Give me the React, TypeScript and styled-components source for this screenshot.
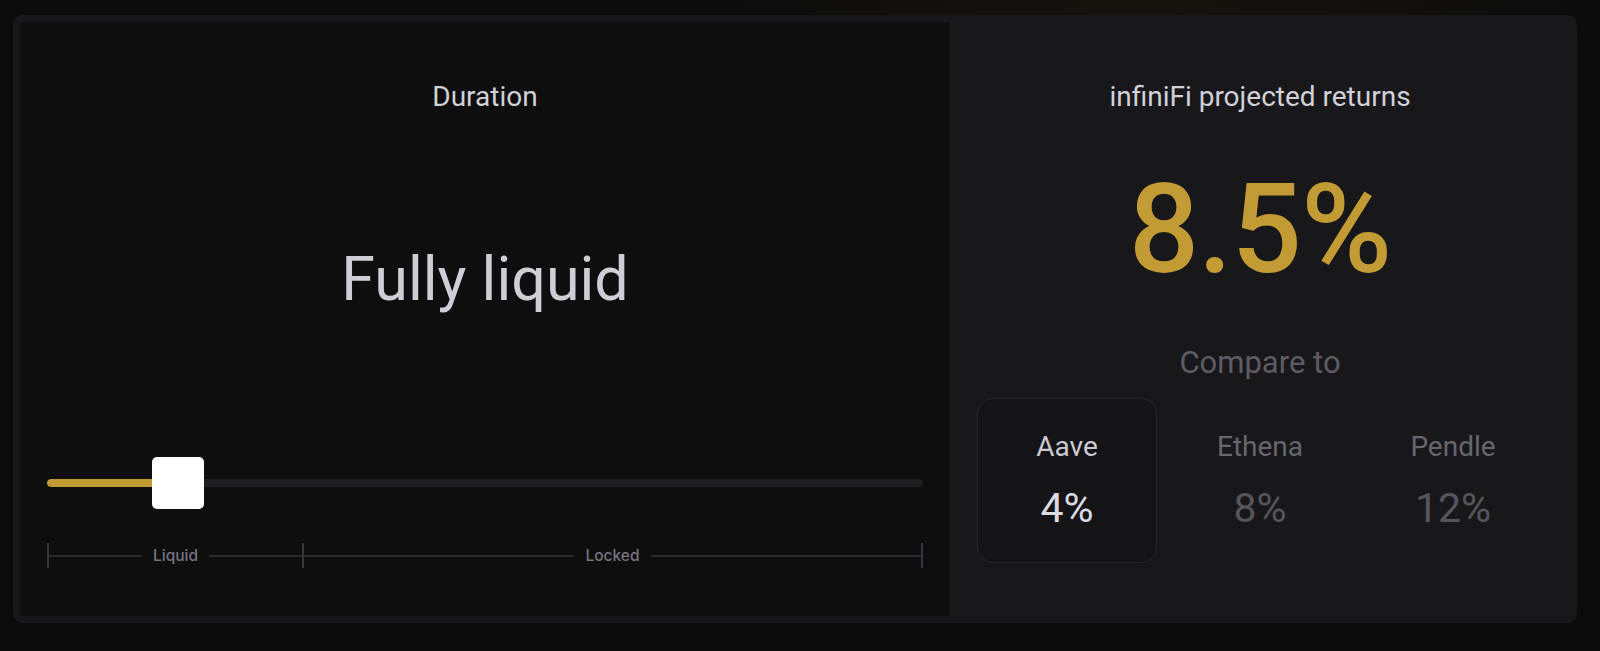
import React from "react";
import styled, { createGlobalStyle } from "styled-components";

const Global = createGlobalStyle`
  html, body {
    margin: 0;
    padding: 0;
    background: #0b0b0c;
  }
  body {
    font-family: Roboto, "Noto Sans", "Liberation Sans", sans-serif;
    -webkit-font-smoothing: antialiased;
  }
  * { box-sizing: border-box; }
`;

const Page = styled.div`
  min-height: 651px;
  padding: 15px 23px 28px 13px;
  background:
    radial-gradient(ellipse 700px 120px at 1150px 0px, rgba(120, 100, 40, 0.10), rgba(0, 0, 0, 0) 70%),
    #0b0b0c;
`;

const Card = styled.div`
  display: grid;
  grid-template-columns: 930px 1fr;
  height: 608px;
  padding: 7px;
  background: #18181b;
  border-radius: 10px;
`;

const LeftPanel = styled.section`
  display: flex;
  flex-direction: column;
  align-items: stretch;
  padding: 60px 27px 0;
  background: #0e0e0f;
`;

const RightPanel = styled.section`
  display: flex;
  flex-direction: column;
  align-items: center;
  padding: 60px 27px 0;
`;

const Heading = styled.h2`
  margin: 0;
  font-size: 28px;
  line-height: 30px;
  font-weight: 400;
  color: #d2d0d8;
  text-align: center;
`;

const BigValue = styled.div`
  margin-top: 131px;
  font-size: 61px;
  line-height: 72px;
  font-weight: 400;
  color: #cfcdd6;
  text-align: center;
`;

const SliderWrap = styled.div`
  position: relative;
  margin-top: 142px;
  height: 52px;
  display: flex;
  align-items: center;
`;

const Track = styled.div`
  flex: 1;
  height: 8px;
  border-radius: 4px;
  background: #1e1e21;
  overflow: hidden;
`;

const Fill = styled.div`
  height: 100%;
  background: #c39b34;
  border-radius: 4px;
`;

const Thumb = styled.div`
  position: absolute;
  top: 0;
  width: 52px;
  height: 52px;
  border-radius: 5px;
  background: #ffffff;
`;

const Scale = styled.div`
  margin-top: 34px;
  display: grid;
  grid-template-columns: 255px 1fr;
  height: 25px;
`;

const Segment = styled.div<{ $end?: boolean }>`
  display: flex;
  align-items: center;
  gap: 11px;
  border-left: 2px solid #37363c;
  border-right: ${(p) => (p.$end ? "2px solid #37363c" : "none")};
`;

const Line = styled.div`
  flex: 1;
  height: 2px;
  background: #2a292e;
`;

const ScaleLabel = styled.span`
  font-family: Inter, "Noto Sans", sans-serif;
  font-size: 15.5px;
  font-weight: 500;
  color: #77737f;
`;

const Projected = styled.div`
  margin-top: 56px;
  font-size: 124px;
  line-height: 124px;
  font-weight: 500;
  letter-spacing: -1px;
  color: #c39b34;
`;

const CompareTitle = styled.div`
  margin-top: 54px;
  font-size: 31px;
  line-height: 34px;
  color: #5d5c64;
`;

const Options = styled.div`
  margin-top: 18px;
  display: grid;
  grid-template-columns: repeat(3, 180px);
  gap: 13px;
`;

const Option = styled.button<{ $active?: boolean }>`
  all: unset;
  box-sizing: border-box;
  height: 165px;
  display: flex;
  flex-direction: column;
  align-items: center;
  padding-top: 33px;
  border-radius: 16px;
  border: 1px solid ${(p) => (p.$active ? "#27272b" : "transparent")};
  background: ${(p) => (p.$active ? "#141416" : "transparent")};
  font-family: Roboto, "Noto Sans", sans-serif;
`;

const OptionName = styled.span<{ $active?: boolean }>`
  font-size: 28px;
  line-height: 30px;
  color: ${(p) => (p.$active ? "#cbc9d2" : "#67666d")};
`;

const OptionValue = styled.span<{ $active?: boolean }>`
  margin-top: 22px;
  font-size: 41px;
  line-height: 48px;
  color: ${(p) => (p.$active ? "#dcdae3" : "#55555b")};
`;

const value = 0.1274;

const options = [
  { name: "Aave", apy: "4%", active: true },
  { name: "Ethena", apy: "8%" },
  { name: "Pendle", apy: "12%" },
];

export default function App() {
  return (
    <>
      <Global />
      <Page>
        <Card>
          <LeftPanel>
            <Heading>Duration</Heading>
            <BigValue>Fully liquid</BigValue>
            <SliderWrap>
              <Track>
                <Fill style={{ width: `calc(${value * 100}% + ${26 - value * 52}px)` }} />
              </Track>
              <Thumb style={{ left: `calc(${value * 100}% - ${value * 52}px)` }} />
            </SliderWrap>
            <Scale>
              <Segment>
                <Line />
                <ScaleLabel>Liquid</ScaleLabel>
                <Line />
              </Segment>
              <Segment $end>
                <Line />
                <ScaleLabel>Locked</ScaleLabel>
                <Line />
              </Segment>
            </Scale>
          </LeftPanel>
          <RightPanel>
            <Heading>infiniFi projected returns</Heading>
            <Projected>8.5%</Projected>
            <CompareTitle>Compare to</CompareTitle>
            <Options>
              {options.map((o) => (
                <Option key={o.name} $active={o.active}>
                  <OptionName $active={o.active}>{o.name}</OptionName>
                  <OptionValue $active={o.active}>{o.apy}</OptionValue>
                </Option>
              ))}
            </Options>
          </RightPanel>
        </Card>
      </Page>
    </>
  );
}
